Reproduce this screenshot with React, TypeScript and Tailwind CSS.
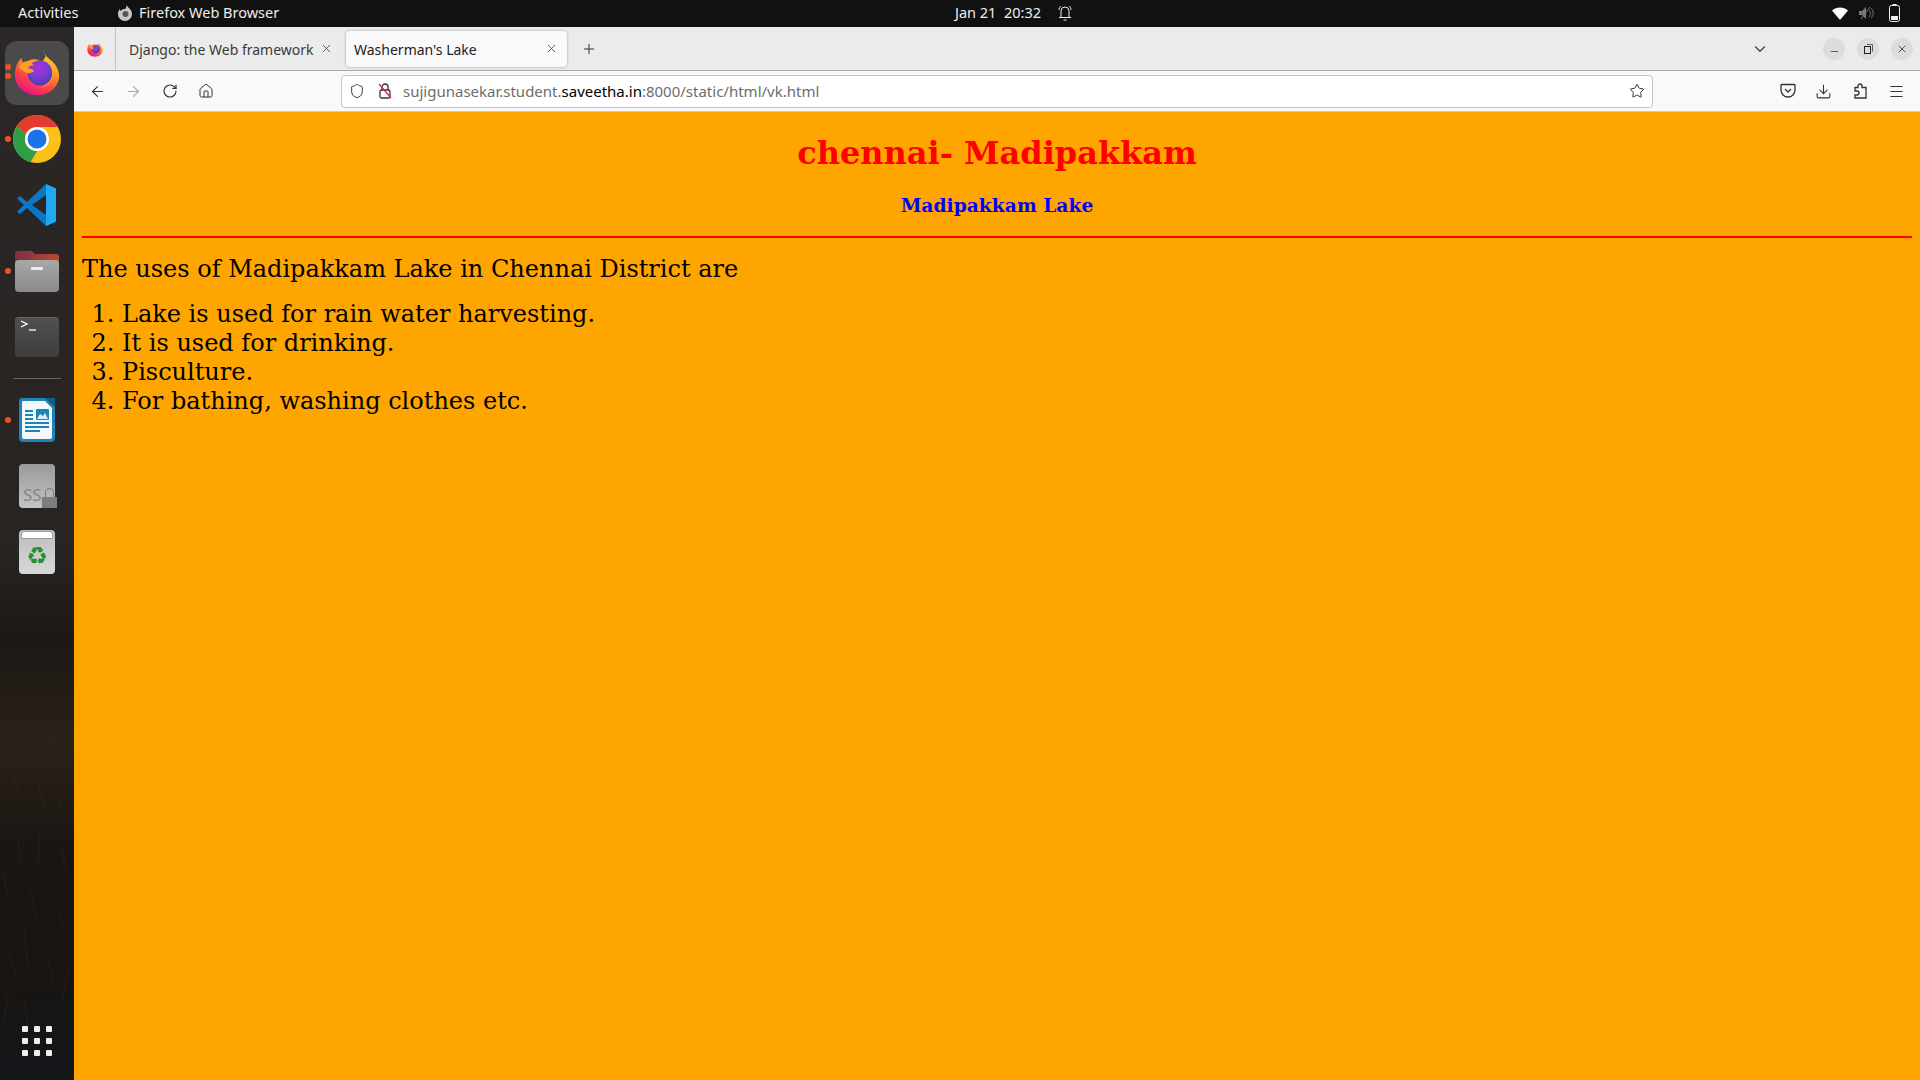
import { ArrowLeft, ArrowRight, ChevronDown, Download, House, Menu, Minus, Plus, RotateCw, Shield, Star, X } from 'lucide-react';

const uiFont = { fontFamily: '"Noto Sans", sans-serif' };

function FirefoxLogo({ size }: { size: number }) {
  const id = `ff${size}`;
  return (
    <svg width={size} height={size} viewBox="0 1 48 48">
      <defs>
        <linearGradient id={`${id}Body`} x1="0.8" y1="0" x2="0.3" y2="1">
          <stop offset="0" stopColor="#ffe14a" />
          <stop offset="0.38" stopColor="#ff9a1f" />
          <stop offset="0.72" stopColor="#ff3f4a" />
          <stop offset="1" stopColor="#e31587" />
        </linearGradient>
        <radialGradient id={`${id}Globe`} cx="0.45" cy="0.3" r="0.75">
          <stop offset="0" stopColor="#b02fd8" />
          <stop offset="0.55" stopColor="#7340d0" />
          <stop offset="1" stopColor="#4a35b0" />
        </radialGradient>
      </defs>
      <path d="M31 0c-1 6 5 9 9 13 5 5 7 10 7 15 0 11-10 20-23 20S1 39 1 27C1 20 3 14 8 9c0 3 1 5 3 6 3-3 8-5 12-4 3 .5 5 2 6 3L33 8c-1-3-2-5-2-8z" fill={`url(#${id}Body)`} />
      <circle cx="27" cy="25" r="13" fill={`url(#${id}Globe)`} />
      <path d="M34 9c5 4 8 10 7 17-1 9-8 15-16 15 8-1 15-7 15-16 0-6-3-11-6-16z" fill="#ffb52a" opacity="0.8" />
      <path d="M5 19c3-5 7-7 11-6l5 4c-3 0-6 1-7 3 3 0 6 1 7 3-3 3-8 3-11 0-2-1-4-3-5-4z" fill="#ff9d25" />
    </svg>
  );
}

function ChromeLogo() {
  return (
    <svg width="48" height="48" viewBox="0 0 48 48">
      <circle cx="24" cy="24" r="24" fill="#fbc116" />
      <path d="M24 0a24 24 0 0 1 20.800 12H24a12 12 0 0 0-11 7L3.600 11.500A24 24 0 0 1 24 0z" fill="#e33b2e" />
      <path d="M3.600 11.500 13 19a12 12 0 0 0 11 17l-6.500 11.300A24 24 0 0 1 3.600 11.500z" fill="#2f9e44" />
      <circle cx="24" cy="24" r="12" fill="#fff" />
      <circle cx="24" cy="24" r="9.500" fill="#1a73e8" />
    </svg>
  );
}

function VsCodeLogo() {
  return (
    <svg width="44" height="44" viewBox="0 0 44 44">
      <path d="M31 1 41 5.500v33L31 43 12 25l-7 6-3-2.500L9 22 2 15.500 5 13l7 6z" fill="#0a78c4" />
      <path d="M31 1 41 5.500v33L31 43z" fill="#22a7f2" />
      <path d="M31 12 17 22l14 10z" fill="#2a2726" />
    </svg>
  );
}

function FilesIcon() {
  return (
    <div className="relative w-[44px] h-[41px]">
      <svg width="44" height="18" viewBox="0 0 44 18" className="block">
        <defs>
          <linearGradient id="folderTop" x1="0" y1="0" x2="1" y2="0">
            <stop offset="0" stopColor="#7a3048" />
            <stop offset="1" stopColor="#bd4a2c" />
          </linearGradient>
        </defs>
        <path d="M3 0h14l3 3h21a3 3 0 0 1 3 3v12H0V3a3 3 0 0 1 3-3z" fill="url(#folderTop)" />
      </svg>
      <div className="absolute left-0 right-0 bottom-0 h-[32px] rounded-[4px] bg-gradient-to-b from-[#a8a8a8] to-[#8a8a8a] flex justify-center">
        <div className="mt-[7px] w-[12px] h-[3px] rounded-[1px] bg-[#eeeeee]" />
      </div>
    </div>
  );
}

function TerminalIcon() {
  return (
    <div className="w-[44px] h-[40px] rounded-[4px] bg-gradient-to-b from-[#505050] to-[#3e3e3e] border-t border-[#666666] pl-[6px] pt-[2px]">
      <svg width="18" height="12" viewBox="0 0 18 12">
        <path d="M0 1l6 3-6 3" fill="none" stroke="#fff" strokeWidth="1.300" />
        <path d="M8 10h7" stroke="#fff" strokeWidth="1.300" />
      </svg>
    </div>
  );
}

function WriterIcon() {
  return (
    <svg width="38" height="46" viewBox="0 0 38 46">
      <path d="M4 1h24l9 9v31a4 4 0 0 1-4 4H5a4 4 0 0 1-4-4V4a3 3 0 0 1 3-3z" fill="#1d84b5" />
      <path d="M5 4h22l7 7v29a2 2 0 0 1-2 2H6a2 2 0 0 1-2-2V5z" fill="#f2f8fb" />
      <path d="M27 1l10 0v9z" fill="#0d5f8c" />
      <rect x="18" y="12" width="13" height="11" rx="1" fill="#1d84b5" />
      <path d="M19 22l3-5 3 2 2-3 3 6z" fill="#d9edf7" />
      <path d="M7 14h8M7 18h8M7 22h8M7 26h24M7 30h24M7 34h15" stroke="#1d84b5" strokeWidth="1.800" />
    </svg>
  );
}

function SsdIcon() {
  return (
    <div className="relative w-[36px] h-[44px] rounded-[4px] bg-gradient-to-b from-[#9a9a9a] to-[#c4c4c4] flex items-end">
      <span className="text-[17px] leading-[27px] text-[#858585] pl-[4px]" style={uiFont}>SS</span>
      <div className="absolute right-[-2px] bottom-0 w-[15px] h-[11px] bg-[#7d7d7d]" />
      <div className="absolute right-[1px] bottom-[11px] w-[9px] h-[9px] rounded-t-full border border-b-0 border-[#7d7d7d]" />
    </div>
  );
}

function TrashIcon() {
  return (
    <div className="relative w-[36px] h-[44px] rounded-[4px] bg-gradient-to-b from-[#bdbdbd] to-[#d8d8d8] flex flex-col items-center">
      <div className="mt-[1px] w-[32px] h-[8px] bg-white rounded-t-[3px] border border-[#999999]" />
      <span className="text-[24px] leading-[28px] mt-[3px] text-[#2a8f2a]" style={{ fontFamily: '"DejaVu Sans", sans-serif' }}>♻</span>
    </div>
  );
}

function DockItem({ running, dots, active, children }: { running?: boolean; dots?: boolean; active?: boolean; children: React.ReactNode }) {
  return (
    <div className="relative w-full h-[66px] flex items-center justify-center">
      {active && <div className="absolute left-[5px] top-px w-[64px] h-[64px] rounded-[12px] bg-[#4a4a4a]" />}
      {running && <div className="absolute left-[5px] top-[30px] w-[6px] h-[6px] rounded-full bg-[#e95420]" />}
      {dots && (
        <div className="absolute left-[5px] top-[24px] flex flex-col gap-[3px]">
          <div className="w-[6px] h-[6px] rounded-full bg-[#e95420]" />
          <div className="w-[6px] h-[6px] rounded-full bg-[#e95420]" />
        </div>
      )}
      <div className="relative">{children}</div>
    </div>
  );
}

// faint grass strands of the wallpaper showing through the dock
function DockTexture() {
  return (
    <svg width="74" height="340" viewBox="0 0 74 340" fill="none" stroke="#3f2a18" strokeWidth="1" opacity="0.45" className="absolute left-0 bottom-[20px]">
      <path d="M50 10l5 24M38 60l6 30M12 50l8 26M66 70l-8 22M18 120l4 28M40 110l-2 34M62 130l4 20M2 150l6 26M30 170l6 26M56 190l10 18M8 230l8 24M24 210l4 40M48 240l6 22M4 300l4-24M24 280l4 26M68 250l-6 30" />
    </svg>
  );
}

function Dock() {
  return (
    <aside className="relative w-[74px] shrink-0 flex flex-col pt-[13px] pb-[24px] bg-[linear-gradient(to_bottom,#2a2726_0%,#282422_50%,#1c1815_58%,#2a2119_68%,#1a1612_78%,#181512_90%,#14161a_100%)]">
      <DockTexture />
      <DockItem dots active><FirefoxLogo size={46} /></DockItem>
      <DockItem running><ChromeLogo /></DockItem>
      <DockItem><VsCodeLogo /></DockItem>
      <DockItem running><FilesIcon /></DockItem>
      <DockItem><TerminalIcon /></DockItem>
      <div className="relative mx-[13px] mt-[8px] mb-[8px] h-px bg-[#666666]" />
      <DockItem running><WriterIcon /></DockItem>
      <DockItem><SsdIcon /></DockItem>
      <DockItem><TrashIcon /></DockItem>
      <div className="relative mt-auto ml-[22px] grid grid-cols-3 gap-[6px] w-[30px]">
        {[0, 1, 2, 3, 4, 5, 6, 7, 8].map((i) => (
          <div key={i} className="w-[6px] h-[6px] rounded-[1px] bg-[#eeeeee]" />
        ))}
      </div>
    </aside>
  );
}

function TopBar() {
  return (
    <header className="h-[27px] shrink-0 bg-[#111111] flex items-center pb-[1px] text-[14.500px] text-[#eeeeee]" style={uiFont}>
      <span className="ml-[18px] w-[99px]">Activities</span>
      <svg width="16" height="16" viewBox="0 0 16 16" className="mr-[6px]">
        <path d="M10 0c0 2.500 5 4 5 9a7 7 0 0 1-14 0c0-2 .8-4 2-5 0 1 .5 2 1 2 1-2 3-2 4-2 1 0 1-2 2-4z" fill="#c8c8c8" />
        <circle cx="8.500" cy="9" r="3" fill="#555555" />
      </svg>
      <span className="w-[137px] whitespace-nowrap">Firefox Web Browser</span>
      <span className="ml-[679px] w-[103px] whitespace-pre">Jan 21  20:32</span>
      <svg width="14" height="16" viewBox="0 0 14 16" fill="none" stroke="#eeeeee" strokeWidth="1">
        <path d="M3 12V6a4 4 0 0 1 8 0v6M1 12.500h12M5.500 15h3M1 5c0-2 1-3 2-4M13 5c0-2-1-3-2-4" />
      </svg>
      <svg width="16" height="13" viewBox="0 0 16 13" className="ml-[760px]">
        <path d="M0 3.500C4-.500 12-.500 16 3.500L8 13z" fill="#fff" />
      </svg>
      <svg width="16" height="16" viewBox="0 0 16 16" className="ml-[10px]">
        <path d="M1 6h3l4-4v12l-4-4H1z" fill="#777777" />
        <path d="M3 14 12 2M11 5c2 2 2 5 0 7M13 3c3 3 3 7 0 10" stroke="#777777" strokeWidth="1" fill="none" />
      </svg>
      <svg width="11" height="18" viewBox="0 0 11 18" className="ml-[15px]">
        <rect x="3.500" y="0" width="4" height="2" fill="#eeeeee" />
        <rect x="0.500" y="1.500" width="10" height="16" rx="2" fill="none" stroke="#eeeeee" />
        <rect x="2" y="12" width="7" height="4" fill="#eeeeee" />
      </svg>
    </header>
  );
}

function TabBar() {
  return (
    <div className="h-[44px] shrink-0 bg-[#ebebeb] border-b border-[#a8a8a8] flex items-center text-[14px]" style={uiFont}>
      <div className="w-[42px] h-full flex items-center justify-center border-r border-[#c4c4c4]">
        <FirefoxLogo size={16} />
      </div>
      <div className="w-[229px] flex items-center pl-[13px] text-[#3a3a3a]">
        <span className="w-[190px] pt-px whitespace-nowrap">Django: the Web framework</span>
        <X size={13} strokeWidth={1.500} className="text-[#444444] ml-px" />
      </div>
      <div className="w-[221px] h-[36px] ml-px rounded-[4px] bg-[#f9f9fb] shadow-[0_0_3px_rgba(0,0,0,0.3)] flex items-center pl-[8px] text-[#222222]">
        <span className="w-[191px] pt-px">Washerman's Lake</span>
        <X size={13} strokeWidth={1.500} className="text-[#444444]" />
      </div>
      <Plus size={16} strokeWidth={1.500} className="ml-[14px] text-[#333333]" />
      <ChevronDown size={18} strokeWidth={1.500} className="ml-[1154px] text-[#333333]" />
      <div className="ml-[54px] w-[22px] h-[22px] rounded-full bg-[#dcdcdc] flex items-center justify-center">
        <Minus size={11} strokeWidth={1.500} className="mt-[5px] text-[#222222]" />
      </div>
      <div className="ml-[12px] w-[22px] h-[22px] rounded-full bg-[#dcdcdc] flex items-center justify-center">
        <svg width="10" height="10" viewBox="0 0 10 10" fill="none" stroke="#222222">
          <rect x="1.500" y="2.500" width="6" height="7" />
          <path d="M4 .500h5.500v7" strokeWidth="0.700" />
        </svg>
      </div>
      <div className="ml-[12px] w-[22px] h-[22px] rounded-full bg-[#dcdcdc] flex items-center justify-center">
        <X size={12} strokeWidth={1.500} className="text-[#222222]" />
      </div>
    </div>
  );
}

function Toolbar() {
  return (
    <div className="h-[41px] shrink-0 bg-[#f9f9fb] border-b border-[#cccccc] flex items-center text-[#333333]">
      <ArrowLeft size={17} strokeWidth={1.500} className="ml-[15px]" />
      <ArrowRight size={17} strokeWidth={1.500} className="ml-[19px] text-[#a8a8a8]" />
      <RotateCw size={16} strokeWidth={1.700} className="ml-[20px]" />
      <House size={16} strokeWidth={1.500} className="ml-[20px]" />
      <div className="ml-[127px] w-[1312px] h-[33px] bg-white border border-[#c4c4c4] rounded-[4px] flex items-center text-[15px]" style={uiFont}>
        <Shield size={16} strokeWidth={1.500} className="ml-[7px]" />
        <svg width="14" height="16" viewBox="0 0 14 16" fill="none" className="ml-[13px]">
          <rect x="2" y="7" width="10" height="8" rx="1.500" stroke="#333333" strokeWidth="1.300" />
          <path d="M4 7V4a3 3 0 0 1 6 0v3" stroke="#333333" strokeWidth="1.300" />
          <path d="M1 1l12 14" stroke="#e22850" strokeWidth="1.300" />
        </svg>
        <span className="ml-[11px] whitespace-nowrap text-[#6d6d6d]">
          sujigunasekar.student.<span className="text-black">saveetha.in</span>:8000/static/html/vk.html
        </span>
        <Star size={16} strokeWidth={1.500} className="ml-auto mr-[7px]" />
      </div>
      <svg width="16" height="16" viewBox="0 0 16 16" fill="none" stroke="#333333" strokeWidth="1.300" className="ml-[127px]">
        <path d="M2 1.500h12a1 1 0 0 1 1 1V7a7 7 0 0 1-14 0V2.500a1 1 0 0 1 1-1z" />
        <path d="M5 6l3 3 3-3" />
      </svg>
      <Download size={17} strokeWidth={1.500} className="ml-[19px]" />
      <svg width="16" height="16" viewBox="0 0 16 16" fill="none" stroke="#333333" strokeWidth="1.300" className="ml-[21px]">
        <path d="M2 4.500h3V3a2 2 0 0 1 4 0v1.500h4V15H2v-3h2a1.500 1.500 0 0 0 0-4H2z" />
      </svg>
      <Menu size={17} strokeWidth={1.500} className="ml-[19px]" />
    </div>
  );
}

function WebPage() {
  return (
    <main className="flex-1 bg-[#ffa500] px-[8px] text-black" style={{ fontFamily: '"DejaVu Serif", serif' }}>
      <h1 className="mt-[23px] text-center text-[32px] leading-[37px] font-bold text-[#ff0000]">chennai- Madipakkam</h1>
      <h2 className="mt-[22px] text-center text-[18.720px] leading-[22px] font-bold text-[#0000ff]">Madipakkam Lake</h2>
      <div className="mt-[20px] h-[2px] bg-[#ff0000]" />
      <p className="mt-[17px] text-[24px] leading-[28px]">The uses of Madipakkam Lake in Chennai District are</p>
      <ol className="mt-[17px] list-decimal pl-[40px] text-[24px] leading-[29px]">
        <li>Lake is used for rain water harvesting.</li>
        <li>It is used for drinking.</li>
        <li>Pisculture.</li>
        <li>For bathing, washing clothes etc.</li>
      </ol>
    </main>
  );
}

export default function App() {
  return (
    <div className="w-[1920px] h-[1080px] overflow-hidden flex flex-col">
      <TopBar />
      <div className="flex-1 flex min-h-0">
        <Dock />
        <div className="flex-1 flex flex-col min-w-0">
          <TabBar />
          <Toolbar />
          <WebPage />
        </div>
      </div>
    </div>
  );
}
